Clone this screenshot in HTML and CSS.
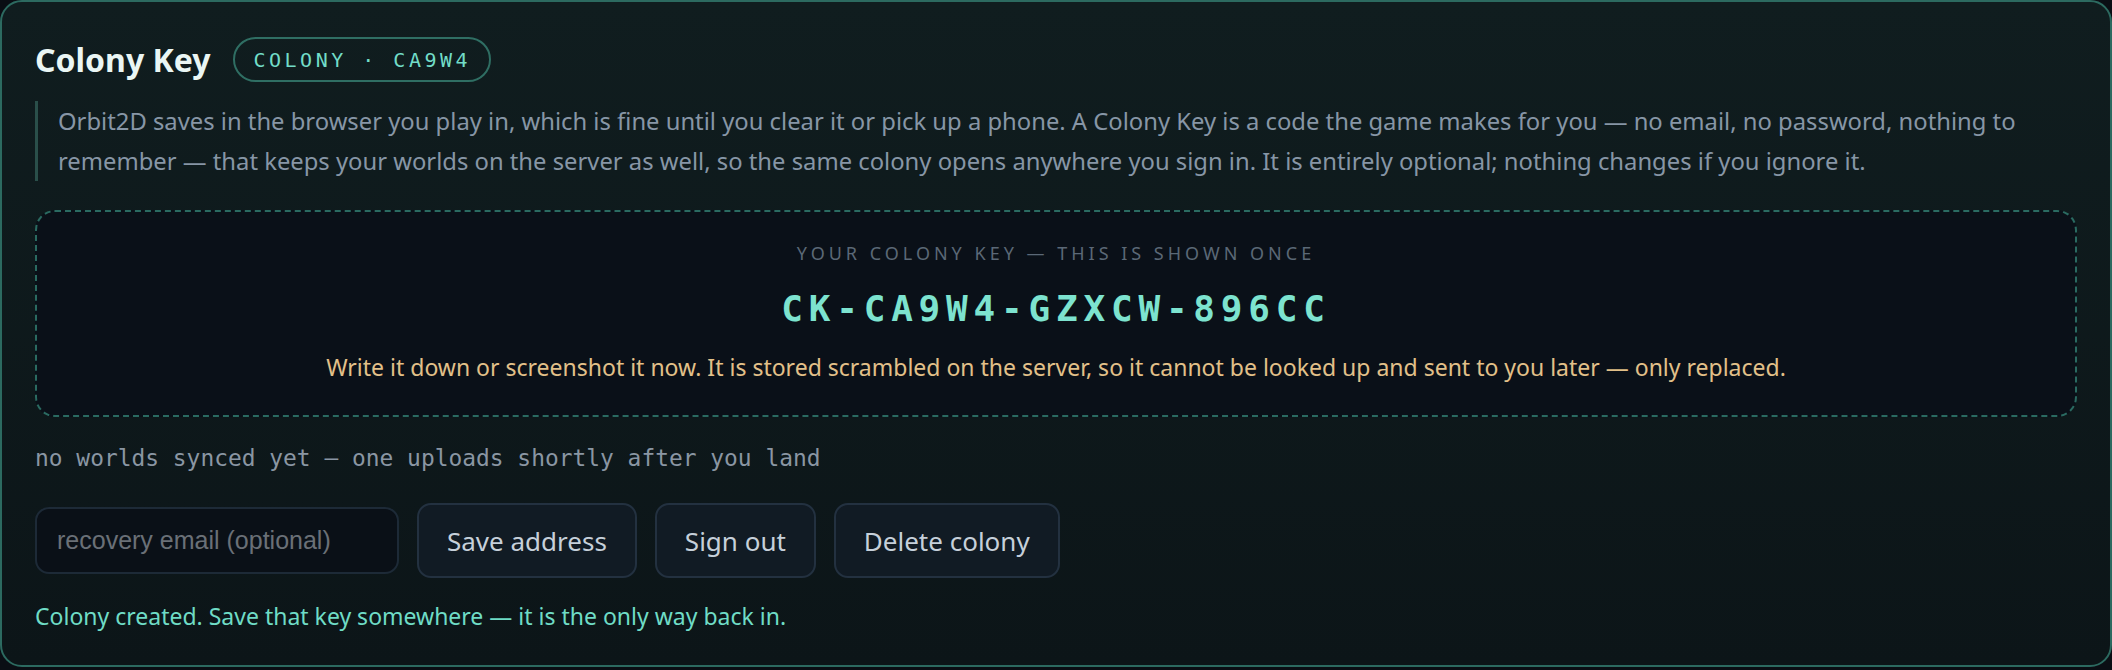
FILE: index.html
```html
<!DOCTYPE html>
<html lang="en">
<head>
    <meta charset="UTF-8">
    <meta name="viewport" content="width=device-width, initial-scale=1.0">
    <title>Colony Key</title>
    <link rel="stylesheet" href="styles.css">
</head>
<body>

<section class="colony-card">
    <div class="card-head">
        <h2>Colony Key</h2>
        <span class="colony-badge">COLONY · CA9W4</span>
    </div>

    <p class="intro">
        Orbit2D saves in the browser you play in, which is fine until you clear it or pick up a phone. A Colony Key is a code the game makes for you — no email, no password, nothing to remember — that keeps your worlds on the server as well, so the same colony opens anywhere you sign in. It is entirely optional; nothing changes if you ignore it.
    </p>

    <div class="key-box">
        <div class="key-label">Your colony key — this is shown once</div>
        <div class="key-code">CK-CA9W4-GZXCW-896CC</div>
        <div class="key-warning">Write it down or screenshot it now. It is stored scrambled on the server, so it cannot be looked up and sent to you later — only replaced.</div>
    </div>

    <div class="sync-status">no worlds synced yet — one uploads shortly after you land</div>

    <div class="controls">
        <input type="email" class="email-input" placeholder="recovery email (optional)">
        <button class="btn">Save address</button>
        <button class="btn">Sign out</button>
        <button class="btn">Delete colony</button>
    </div>

    <p class="message">Colony created. Save that key somewhere — it is the only way back in.</p>
</section>

</body>
</html>
```

FILE: styles.css
```css
html, body {
    margin: 0;
    padding: 0;
}

body {
    background: #0a0e14;
    font-family: 'Noto Sans', sans-serif;
    color: #e6f2f0;
}

.colony-card {
    box-sizing: border-box;
    width: 2112px;
    height: 667px;
    padding: 30px 33px;
    border: 2px solid #2c6a60;
    border-radius: 22px;
    background: linear-gradient(to bottom, #101d1f, #0c1518);
}

.card-head {
    display: flex;
    align-items: center;
    gap: 23px;
    margin-top: 5px;
}

.card-head h2 {
    margin: 0;
    font-size: 32px;
    font-weight: 700;
    color: #eaf6f4;
    line-height: 38px;
}

.colony-badge {
    display: inline-flex;
    align-items: center;
    box-sizing: border-box;
    height: 45px;
    padding: 0 18px;
    border: 2px solid #2f6e63;
    border-radius: 999px;
    font-family: 'DejaVu Sans Mono', monospace;
    font-size: 20px;
    letter-spacing: 3.5px;
    color: #72dcc8;
}

.intro {
    margin: 19px 0 0 0;
    padding-left: 20px;
    border-left: 3px solid #2a4f4a;
    font-size: 23.8px;
    line-height: 40px;
    color: #8796a6;
}

.key-box {
    margin-top: 29px;
    padding: 28px 20px 33px;
    border: 2px dashed #2a6a61;
    border-radius: 20px;
    background: #0a1018;
    text-align: center;
}

.key-label {
    font-size: 18px;
    line-height: 26px;
    letter-spacing: 4px;
    text-transform: uppercase;
    color: #5b6876;
}

.key-code {
    margin-top: 21px;
    font-family: 'DejaVu Sans Mono', monospace;
    font-weight: 700;
    font-size: 36px;
    line-height: 44px;
    letter-spacing: 5.8px;
    color: #7de3cf;
}

.key-warning {
    margin-top: 21px;
    font-size: 23px;
    line-height: 30px;
    color: #e2c089;
}

.sync-status {
    margin-top: 26px;
    font-family: 'DejaVu Sans Mono', monospace;
    font-size: 22.9px;
    line-height: 30px;
    color: #8a96a3;
}

.controls {
    display: flex;
    align-items: center;
    gap: 18px;
    margin-top: 30px;
}

.email-input {
    box-sizing: border-box;
    width: 364px;
    height: 67px;
    padding: 0 20px;
    border: 2px solid #1d2a37;
    border-radius: 14px;
    background: #0a1017;
    font-family: 'Liberation Sans', Arial, sans-serif;
    font-size: 25px;
    color: #c9d3dd;
    outline: none;
}

.email-input::placeholder {
    color: #6a7077;
}

.btn {
    box-sizing: border-box;
    height: 75px;
    padding: 0 28px;
    border: 2px solid #233140;
    border-radius: 14px;
    background: #111b24;
    font-family: 'Noto Sans', sans-serif;
    font-size: 26px;
    color: #c6d0da;
    cursor: pointer;
}

.btn:hover {
    background: #16222d;
}

.message {
    margin: 23px 0 0 0;
    font-size: 23px;
    line-height: 30px;
    color: #6fdcc6;
}
```
